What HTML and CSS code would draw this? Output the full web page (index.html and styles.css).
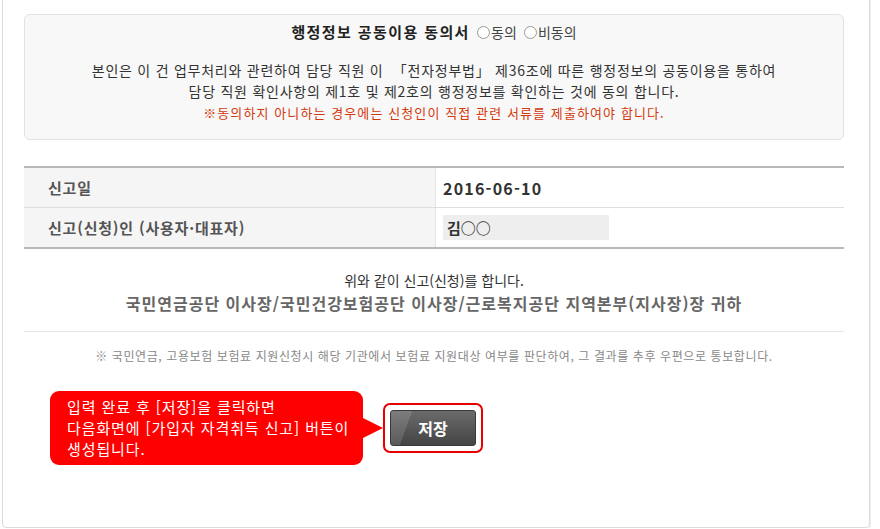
FILE: index.html
```html
<!DOCTYPE html>
<html lang="ko">
<head>
    <meta charset="UTF-8">
    <meta name="viewport" content="width=device-width, initial-scale=1.0">
    <title>가입자 자격취득 신고</title>
    <link rel="stylesheet" href="styles.css">
</head>
<body>

<div class="panel">
    <div class="consent">
        <p class="consent-title">
            <strong>행정정보 공동이용 동의서</strong>
            <label class="choice"><span class="radio"></span>동의</label>
            <label class="choice"><span class="radio"></span>비동의</label>
        </p>
        <p class="consent-text">본인은 이 건 업무처리와 관련하여 담당 직원 이 &nbsp;「전자정부법」 제36조에 따른 행정정보의 공동이용을 통하여<br>담당 직원 확인사항의 제1호 및 제2호의 행정정보를 확인하는 것에 동의 합니다.</p>
        <p class="consent-warn">※동의하지 아니하는 경우에는 신청인이 직접 관련 서류를 제출하여야 합니다.</p>
    </div>

    <table class="report">
        <tr>
            <th>신고일</th>
            <td class="date">2016-06-10</td>
        </tr>
        <tr>
            <th>신고(신청)인 (사용자·대표자)</th>
            <td><div class="name-box">김○○</div></td>
        </tr>
    </table>

    <div class="declare">
        <p>위와 같이 신고(신청)를 합니다.</p>
        <p class="addressee">국민연금공단 이사장/국민건강보험공단 이사장/근로복지공단 지역본부(지사장)장 귀하</p>
    </div>

    <p class="notice">※ 국민연금, 고용보험 보험료 지원신청시 해당 기관에서 보험료 지원대상 여부를 판단하여, 그 결과를 추후 우편으로 통보합니다.</p>

    <div class="actions">
        <div class="tip">입력 완료 후 [저장]을 클릭하면<br>다음화면에 [가입자 자격취득 신고] 버튼이<br>생성됩니다.</div>
        <div class="save-wrap"><button class="save">저장</button></div>
    </div>
</div>

</body>
</html>
```

FILE: styles.css
```css
body {
    margin: 0;
    font-family: "Noto Sans CJK KR", "Noto Sans", sans-serif;
    color: #333;
    background: #fff;
}
p {
    margin: 0;
}
.panel {
    margin: -10px 10px 0 2px;
    padding: 23px 25px 62px 21px;
    border: 1px solid #dcdcdc;
    border-radius: 4px;
    box-shadow: 1px 1px 0 #efefef;
}

/* 동의서 박스 */
.consent {
    background: #f8f8f8;
    border: 1px solid #e2e2e2;
    border-radius: 6px;
    padding: 6px 0 16px;
    text-align: center;
}
.consent-title {
    font-size: 15px;
    line-height: 22px;
    color: #222;
}
.consent-title strong {
    letter-spacing: 1.4px;
}
.choice {
    margin-left: 3px;
    font-size: 14px;
    color: #444;
}
.radio {
    display: inline-block;
    width: 11px;
    height: 11px;
    margin-right: 1px;
    border: 1px solid #999;
    border-radius: 50%;
    background: #fff;
    vertical-align: -1px;
}
.consent-text {
    margin-top: 17px;
    font-size: 14px;
    letter-spacing: 0.75px;
    line-height: 21px;
}
.consent-warn {
    font-size: 13px;
    letter-spacing: 1.1px;
    line-height: 21px;
    color: #d4380d;
}

/* 신고 내용 */
.report {
    width: 100%;
    margin-top: 26px;
    border-collapse: collapse;
    border-top: 2px solid #b8b8b8;
    border-bottom: 2px solid #b8b8b8;
}
.report th,
.report td {
    height: 39px;
    padding: 0;
    border-bottom: 1px solid #dedede;
    text-align: left;
}
.report th {
    width: 387px;
    padding-left: 24px;
    background: #f5f5f5;
    border-right: 1px solid #e4e4e4;
    font-size: 15px;
    letter-spacing: 0.8px;
    color: #555;
}
.report td {
    padding-left: 7px;
}
.date {
    font-size: 16px;
    font-weight: bold;
    letter-spacing: 1.2px;
    color: #333;
}
.name-box {
    width: 162px;
    height: 25px;
    padding-left: 4px;
    background: #eee;
    font-size: 15px;
    font-weight: bold;
    line-height: 25px;
    color: #333;
}

.declare {
    margin-top: 20px;
    padding-bottom: 16px;
    border-bottom: 1px solid #e4e4e4;
    text-align: center;
    font-size: 14px;
    line-height: 23px;
}
.addressee {
    font-size: 16px;
    font-weight: bold;
    letter-spacing: 1px;
    color: #666;
}
.notice {
    margin-top: 15px;
    text-align: center;
    font-size: 12px;
    letter-spacing: 0.6px;
    line-height: 18px;
    color: #888;
}

/* 저장 영역 */
.actions {
    display: flex;
    align-items: center;
    gap: 20px;
    margin-top: 26px;
    padding-left: 26px;
}
.tip {
    position: relative;
    width: 313px;
    box-sizing: border-box;
    padding: 5px 0 6px 17px;
    background: #f00;
    border-radius: 9px;
    color: #fff;
    font-size: 15px;
    letter-spacing: 0.9px;
    line-height: 21px;
    white-space: nowrap;
}
.tip::after {
    content: "";
    position: absolute;
    right: -20px;
    top: 27px;
    border-left: 20px solid #f00;
    border-top: 10px solid transparent;
    border-bottom: 10px solid transparent;
}
.save-wrap {
    padding: 5px;
    border: 2px solid #e60000;
    border-radius: 7px;
}
.save {
    display: block;
    width: 86px;
    height: 36px;
    border: 1px solid #3a3a3a;
    border-radius: 3px;
    background:
        linear-gradient(110deg, rgba(255,255,255,0.12) 0 22%, transparent 22%),
        linear-gradient(#6b6b6b, #444);
    color: #fff;
    font-family: inherit;
    font-size: 16px;
    font-weight: bold;
    cursor: pointer;
}
```
